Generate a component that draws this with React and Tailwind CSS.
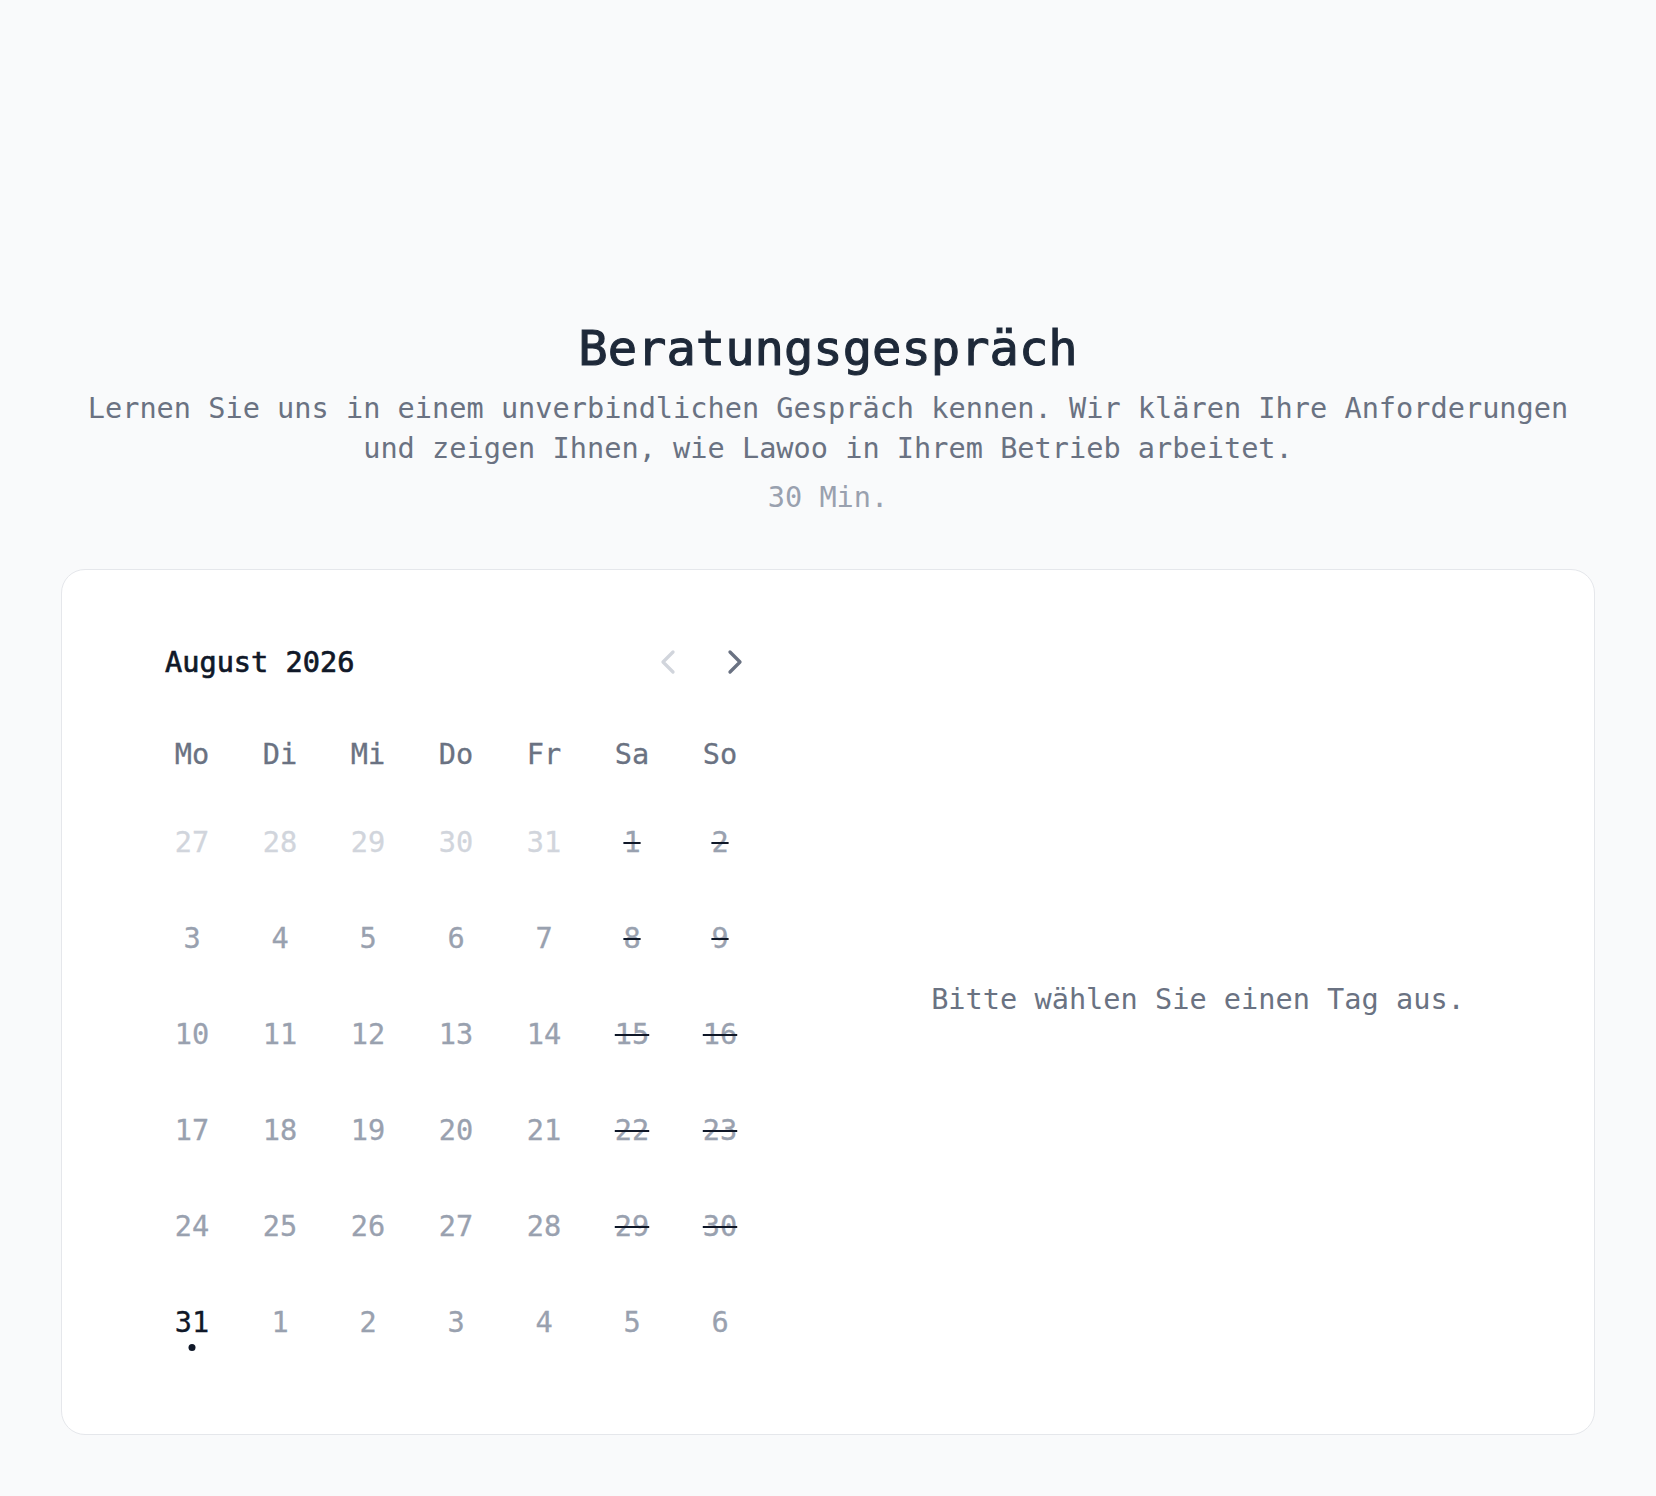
import React, { useState } from "react";
import { ChevronLeft, ChevronRight } from "lucide-react";

const WEEKDAYS = ["Mo", "Di", "Mi", "Do", "Fr", "Sa", "So"];

// August 2026 starts on a Saturday; the grid is padded with July / September days
const buildDays = () => {
  const days = [];
  [27, 28, 29, 30, 31].forEach((d) => days.push({ day: d, muted: true }));
  for (let d = 1; d <= 31; d++) {
    days.push({ day: d });
  }
  [1, 2, 3, 4, 5, 6].forEach((d) => days.push({ day: d, next: true }));
  return days;
};

const DayCell = ({ item, index }) => {
  const col = index % 7;
  const weekend = col >= 5;
  const isToday = !item.muted && !item.next && item.day === 31;

  let cls = "text-gray-400";
  if (item.muted) cls = "text-gray-300";
  else if (isToday) cls = "text-gray-900";
  else if (weekend && !item.next)
    cls = "text-gray-400 line-through decoration-gray-900 decoration-2";

  return (
    <div className="relative h-[96px] flex items-center justify-center">
      <span className={cls}>{item.day}</span>
      {isToday && (
        <span className="absolute left-1/2 top-[70px] -translate-x-1/2 w-[7px] h-[7px] rounded-full bg-gray-900" />
      )}
    </div>
  );
};

const App = () => {
  const [days] = useState(buildDays);

  return (
    <div className="min-h-screen bg-gray-50 px-[61px] pt-[325px] pb-[61px] font-['DejaVu_Sans_Mono','Liberation_Mono',monospace]">
      {/* intro */}
      <div className="text-center">
        <h1 className="text-[48.8px] leading-[48px] font-normal text-gray-800 [-webkit-text-stroke:1.1px_currentColor]">
          Beratungsgespräch
        </h1>
        <p className="mt-[15px] text-[28.6px] leading-[40px] text-gray-500">
          Lernen Sie uns in einem unverbindlichen Gespräch kennen. Wir klären
          Ihre Anforderungen und zeigen Ihnen, wie Lawoo in Ihrem Betrieb
          arbeitet.
        </p>
        <p className="mt-[9px] text-[28.6px] leading-[40px] text-gray-400">
          30 Min.
        </p>
      </div>

      {/* booking card */}
      <div className="mt-[52px] flex rounded-3xl border border-gray-200 bg-white px-[103px] py-16 text-[28.6px] leading-[40px]">
        <div className="w-[582px] shrink-0">
          <div className="h-[56px] flex items-center justify-between">
            <span className="text-gray-900 [-webkit-text-stroke:0.7px_currentColor]">
              August 2026
            </span>
            <div className="flex items-center gap-[27px] mr-[-8px]">
              <button className="text-gray-300">
                <ChevronLeft size={40} strokeWidth={2} />
              </button>
              <button className="text-gray-500">
                <ChevronRight size={40} strokeWidth={2} />
              </button>
            </div>
          </div>

          <div className="mt-[36px] h-[56px] grid grid-cols-7 gap-x-[34px] items-center text-center text-gray-500 [-webkit-text-stroke:0.3px_currentColor]">
            {WEEKDAYS.map((w) => (
              <span key={w}>{w}</span>
            ))}
          </div>

          <div className="mt-[12px] grid grid-cols-7 gap-x-[34px] [-webkit-text-stroke:0.3px_currentColor]">
            {days.map((item, i) => (
              <DayCell key={i} item={item} index={i} />
            ))}
          </div>
        </div>

        <div className="ml-[158px] pb-[6px] flex-1 flex items-center justify-center text-gray-500">
          Bitte wählen Sie einen Tag aus.
        </div>
      </div>
    </div>
  );
};

export default App;
